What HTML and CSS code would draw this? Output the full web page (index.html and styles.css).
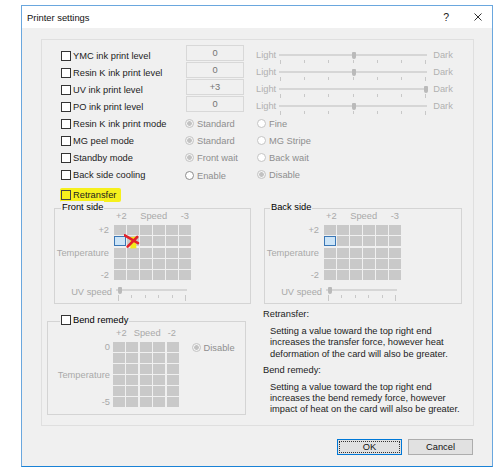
FILE: index.html
```html
<!DOCTYPE html>
<html>
<head>
<meta charset="utf-8">
<title>Printer settings</title>
<link rel="stylesheet" href="styles.css">
</head>
<body>
<div class="window">
  <div class="titlebar">
    <span class="title">Printer settings</span>
    <span class="help">?</span>
    <svg class="close" width="8" height="8" viewBox="0 0 8 8"><path d="M0.5 0.5L7.5 7.5M7.5 0.5L0.5 7.5" stroke="#1a1a1a" stroke-width="0.9" fill="none"/></svg>
  </div>
  <div class="panel">
    <div class="rows">
      <div class="row">
        <div class="c1"><span class="cb"></span><span>YMC ink print level</span></div>
        <div class="c2"><div class="num">0</div></div>
        <div class="c3 slider">
          <span class="lvl">Light</span>
          <div class="sl"><div class="track"><span class="thumb" style="left:74px"></span></div><div class="ticks"><i></i><i></i><i></i><i></i><i></i><i></i><i></i></div></div>
          <span class="lvl">Dark</span>
        </div>
      </div>
      <div class="row">
        <div class="c1"><span class="cb"></span><span>Resin K ink print level</span></div>
        <div class="c2"><div class="num">0</div></div>
        <div class="c3 slider">
          <span class="lvl">Light</span>
          <div class="sl"><div class="track"><span class="thumb" style="left:74px"></span></div><div class="ticks"><i></i><i></i><i></i><i></i><i></i><i></i><i></i></div></div>
          <span class="lvl">Dark</span>
        </div>
      </div>
      <div class="row">
        <div class="c1"><span class="cb"></span><span>UV ink print level</span></div>
        <div class="c2"><div class="num">+3</div></div>
        <div class="c3 slider">
          <span class="lvl">Light</span>
          <div class="sl"><div class="track"><span class="thumb" style="left:146px"></span></div><div class="ticks"><i></i><i></i><i></i><i></i><i></i><i></i><i></i></div></div>
          <span class="lvl">Dark</span>
        </div>
      </div>
      <div class="row">
        <div class="c1"><span class="cb"></span><span>PO ink print level</span></div>
        <div class="c2"><div class="num">0</div></div>
        <div class="c3 slider">
          <span class="lvl">Light</span>
          <div class="sl"><div class="track"><span class="thumb" style="left:74px"></span></div><div class="ticks"><i></i><i></i><i></i><i></i><i></i><i></i><i></i></div></div>
          <span class="lvl">Dark</span>
        </div>
      </div>
      <div class="row">
        <div class="c1"><span class="cb"></span><span>Resin K ink print mode</span></div>
        <div class="c2 opt"><span class="rb on"></span><span>Standard</span></div>
        <div class="c3 opt"><span class="rb"></span><span>Fine</span></div>
      </div>
      <div class="row">
        <div class="c1"><span class="cb"></span><span>MG peel mode</span></div>
        <div class="c2 opt"><span class="rb on"></span><span>Standard</span></div>
        <div class="c3 opt"><span class="rb"></span><span>MG Stripe</span></div>
      </div>
      <div class="row">
        <div class="c1"><span class="cb"></span><span>Standby mode</span></div>
        <div class="c2 opt"><span class="rb on"></span><span>Front wait</span></div>
        <div class="c3 opt"><span class="rb"></span><span>Back wait</span></div>
      </div>
      <div class="row last">
        <div class="c1"><span class="cb"></span><span>Back side cooling</span></div>
        <div class="c2 opt"><span class="rb en"></span><span>Enable</span></div>
        <div class="c3 opt up"><span class="rb on"></span><span>Disable</span></div>
      </div>
    </div>

    <div class="retrans">
      <div class="hl"><span class="cb yellow"></span><span>Retransfer</span></div>
    </div>

    <div class="sides">
      <div class="group side front">
        <div class="legend">Front side</div>
        <div class="hdr"><span>+2</span><span>Speed</span><span>-3</span></div>
        <div class="gridrow">
          <div class="ylab"><span>+2</span><span class="mid">Temperature</span><span class="bot">-2</span></div>
          <div class="cells">
            <i></i><i></i><i></i><i></i><i></i><i></i>
            <i class="sel"></i><i></i><i></i><i></i><i></i><i></i>
            <i></i><i></i><i></i><i></i><i></i><i></i>
            <i></i><i></i><i></i><i></i><i></i><i></i>
            <i></i><i></i><i></i><i></i><i></i><i></i>
          </div>
        </div>
        <div class="uv">
          <span class="uvlab">UV speed</span>
          <div class="sl small"><div class="track"><span class="thumb" style="left:3px"></span></div><div class="ticks"><i></i><i></i><i></i><i></i><i></i><i></i></div></div>
        </div>
        <svg class="mark" width="18" height="16" viewBox="0 0 18 16">
          <path d="M6 3.2 L11.8 2.6 L12.4 14.2 L6.4 14.6 Z" fill="#f2ea18"/>
          <path d="M0.8 1.4 L14 9.2" stroke="#e2222a" stroke-width="2.6" stroke-linecap="round" fill="none"/>
          <path d="M13.2 3 L3.6 12.6" stroke="#e2222a" stroke-width="2.6" stroke-linecap="round" fill="none"/>
        </svg>
      </div>
      <div class="group side back">
        <div class="legend">Back side</div>
        <div class="hdr"><span>+2</span><span>Speed</span><span>-3</span></div>
        <div class="gridrow">
          <div class="ylab"><span>+2</span><span class="mid">Temperature</span><span class="bot">-2</span></div>
          <div class="cells">
            <i></i><i></i><i></i><i></i><i></i><i></i>
            <i class="sel"></i><i></i><i></i><i></i><i></i><i></i>
            <i></i><i></i><i></i><i></i><i></i><i></i>
            <i></i><i></i><i></i><i></i><i></i><i></i>
            <i></i><i></i><i></i><i></i><i></i><i></i>
          </div>
        </div>
        <div class="uv">
          <span class="uvlab">UV speed</span>
          <div class="sl small"><div class="track"><span class="thumb" style="left:3px"></span></div><div class="ticks"><i></i><i></i><i></i><i></i><i></i><i></i></div></div>
        </div>
      </div>
    </div>

    <div class="bottom">
      <div class="group bend">
        <div class="legend blegend"><span class="cb"></span><span>Bend remedy</span></div>
        <div class="hdr bhdr"><span>+2</span><span>Speed</span><span>-2</span></div>
        <div class="gridrow bgrid">
          <div class="ylab bylab"><span>0</span><span class="bmid">Temperature</span><span class="bbot">-5</span></div>
          <div class="cells bcells">
            <i></i><i></i><i></i><i></i><i></i>
            <i></i><i></i><i></i><i></i><i></i>
            <i></i><i></i><i></i><i></i><i></i>
            <i></i><i></i><i></i><i></i><i></i>
            <i></i><i></i><i></i><i></i><i></i>
            <i></i><i></i><i></i><i></i><i></i>
          </div>
          <div class="opt bopt"><span class="rb on"></span><span>Disable</span></div>
        </div>
      </div>
      <div class="notes">
        <div class="nh">Retransfer:</div>
        <div class="np">Setting a value toward the top right end<br>increases the transfer force, however heat<br>deformation of the card will also be greater.</div>
        <div class="nh nh2">Bend remedy:</div>
        <div class="np">Setting a value toward the top right end<br>increases the bend remedy force, however<br>impact of heat on the card will also be greater.</div>
      </div>
    </div>
  </div>

  <div class="buttons">
    <div class="btn ok"><div class="focus">OK</div></div>
    <div class="btn">Cancel</div>
  </div>
</div>
</body>
</html>
```
FILE: styles.css
```css
* { box-sizing: border-box; }
html, body { margin: 0; padding: 0; background: #fff; }
body {
  width: 494px; height: 471px; overflow: hidden;
  font-family: "Liberation Sans", Arial, sans-serif;
  font-size: 9.3px; color: #1c1c1c; white-space: nowrap;
}
.window {
  margin: 5px 0 0 21px; width: 472px; height: 462px;
  border: 1px solid #6aa7de; border-bottom-color: #1a82d6;
  background: #f0f0f0;
}
.titlebar {
  height: 22px; background: #fff; display: flex; align-items: center;
  padding-left: 5px;
}
.title { flex: 1; font-size: 9.4px; color: #111; }
.help { font-size: 10.5px; margin-right: 25px; color: #222; }
.close { margin-right: 10px; }

.panel {
  margin: 11px 18px 0 19px; height: 387px;
  border: 1px solid #dfdfdf;
}
.rows { padding: 5px 0 0 19px; }
.row { display: flex; height: 17px; align-items: flex-start; }
.c1 { width: 125px; height: 17px; margin-top: 2px; display: flex; align-items: center; gap: 2px; color: #1c1c1c; }
.c2 { width: 70px; }
.num {
  width: 58px; height: 16px; border: 1px solid #d8d8d8;
  text-align: center; line-height: 14px; color: #747474;
}
.opt { height: 17px; margin-top: 2px; display: flex; align-items: center; gap: 3px; color: #8e8e8e; }
.c2.opt { margin-left: -1px; width: 71px; }
.c3.opt { margin-left: 1px; }
.row.last .opt { margin-top: 3px; }
.row.last .c3.opt.up { margin-top: 2px; }

.cb { width: 10px; height: 10px; border: 1px solid #333; background: #fff; flex: none; }
.cb.yellow { background: transparent; border-color: #444; }
.rb { width: 9px; height: 9px; border-radius: 50%; border: 1px solid #c4c4c4; background: #fff; flex: none; }
.rb.on { background: radial-gradient(circle, #c2c2c2 0 2px, #f3f3f3 2.6px); }
.rb.en { border-color: #8d8d8d; }

.slider { height: 17px; margin-top: 2px; display: flex; align-items: flex-start; }
.lvl { line-height: 17px; color: #b0b0b0; }
.sl {
  width: 148px; height: 17px; display: flex; flex-direction: column;
  padding-top: 7px; margin: 0 6px 0 3px;
}
.track { height: 3px; background: #e8e8e8; border: 1px solid #d6d6d6; position: relative; }
.thumb {
  position: absolute; top: -3px; width: 4px; height: 7px; margin-left: -2px;
  background: #bababa; border-radius: 1px 1px 2px 2px;
}
.ticks { display: flex; justify-content: space-between; padding: 0 1px; margin-top: 4px; align-items: flex-start; }
.ticks i { width: 1px; height: 3px; background: #c8c8c8; }
.ticks i:first-child, .ticks i:last-child { height: 4px; }

.retrans { height: 14px; margin-top: 7px; padding-left: 18px; display: flex; }
.hl {
  display: flex; align-items: center; gap: 2px; height: 14px;
  background: #f6f01c; padding: 0 5px 0 1px; border-radius: 2px;
}

.sides { display: flex; margin-top: 6px; padding-left: 12px; gap: 13px; }
.group { border: 1px solid #d4d4d4; }
.side { width: 197px; height: 96px; position: relative; }
.back { width: 198px; }
.legend {
  margin: -8px 0 0 6px; padding: 0 1px; line-height: 12px;
  background: #f0f0f0; width: max-content; color: #000;
}
.back .legend { margin-left: 5px; }
.hdr {
  display: flex; justify-content: space-between; width: 77px;
  margin: -2px 0 0 59px; line-height: 11px; padding: 0 2px; color: #a9a9a9;
}
.gridrow { display: flex; margin-top: 3px; align-items: flex-start; }
.ylab {
  width: 54px; margin-right: 5px; display: grid;
  grid-template-rows: repeat(5, 10px); row-gap: 1.25px;
  text-align: right; line-height: 10px; color: #a9a9a9;
}
.ylab .mid { grid-row: 3; }
.ylab .bot { grid-row: 5; }
.cells {
  display: grid; grid-template-columns: repeat(6, 12px);
  grid-template-rows: repeat(5, 10px); gap: 1.25px 1px;
}
.cells i { background: #c9c9c9; }
.cells i.sel { background: #cce4f7; border: 1px solid #3a77b6; }

.uv { display: flex; height: 12px; margin-top: 6px; align-items: flex-start; }
.uvlab { width: 57px; text-align: right; line-height: 12px; color: #a9a9a9; }
.sl.small { width: 71px; height: 12px; padding-top: 3px; margin: 0 0 0 4px; }
.sl.small .ticks { padding: 0 1px 0 2px; }
.sl.small .ticks i:first-child, .sl.small .ticks i:last-child { height: 6px; }

.mark { position: absolute; left: 69px; top: 25px; }

.bottom { display: flex; margin-top: 4px; align-items: flex-start; }
.bend { width: 199px; height: 94px; margin: 13px 0 0 5px; }
.blegend { display: flex; align-items: center; gap: 2px; margin-left: 12px; }
.bhdr { width: 66px; margin: 2px 0 0 65px; padding: 0 3px; }
.bgrid { margin-top: 3px; }
.bylab {
  width: 62px; margin-right: 3px;
  grid-template-rows: repeat(6, 10px); row-gap: 1.1px;
}
.bylab .bmid { grid-row: 3 / 5; align-self: center; }
.bylab .bbot { grid-row: 6; }
.bcells {
  grid-template-columns: repeat(5, 12px);
  grid-template-rows: repeat(6, 10px); gap: 1.1px 1.4px;
}
.bopt { margin: 0 0 0 13px; height: 11px; }

.notes { margin-left: 17px; color: #1c1c1c; }
.nh { line-height: 12px; }
.np { margin-top: 6px; padding-left: 7px; line-height: 11.3px; }
.nh2 { margin-top: 4px; }
.nh2 + .np { margin-top: 6px; }

.buttons { display: flex; justify-content: flex-end; gap: 6px; margin: 13px 19px 0 0; }
.btn {
  width: 65px; height: 16px; border: 1px solid #adadad; background: #e1e1e1;
  text-align: center; line-height: 14px; color: #111;
}
.ok { border-color: #0078d7; padding: 1px; line-height: 12px; }
.focus { height: 12px; border: 1px dotted #333; line-height: 10px; }
```
